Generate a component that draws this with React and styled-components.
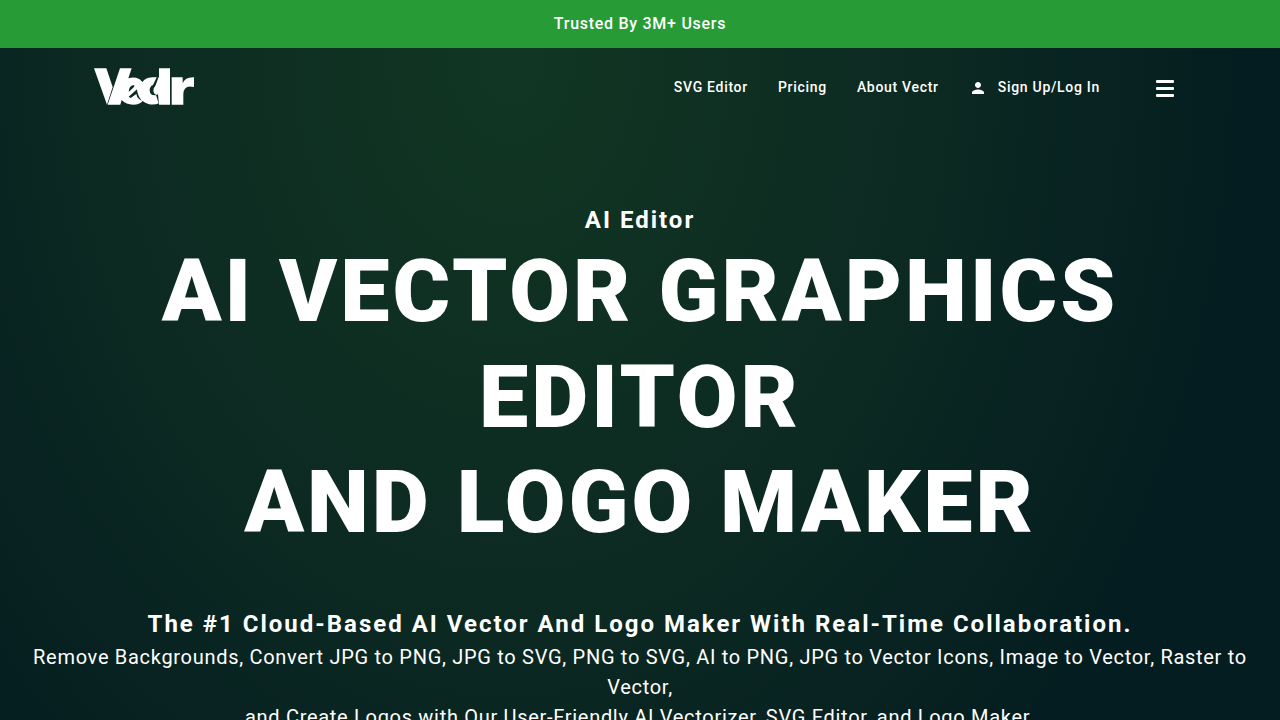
import React from "react";
import styled, { createGlobalStyle } from "styled-components";
import { MdPerson } from "react-icons/md";

const GlobalStyle = createGlobalStyle`
  * {
    box-sizing: border-box;
  }

  body {
    margin: 0;
    background: #041d20;
    color: #fff;
    font-family: Roboto, "Liberation Sans", sans-serif;
  }

  h1,
  h2,
  p {
    margin: 0;
  }
`;

const Page = styled.div`
  min-height: 100vh;
  overflow: hidden;
  background: radial-gradient(
    ellipse 740px 960px at 40% 8%,
    #113622 0%,
    #0d2b22 50%,
    #041d20 100%
  );
`;

const Banner = styled.div`
  padding: 12px 16px;
  background: #279b35;
  font-size: 16px;
  font-weight: 500;
  line-height: 24px;
  letter-spacing: 0.045em;
  text-align: center;
`;

const Header = styled.header`
  display: flex;
  align-items: center;
  justify-content: space-between;
  max-width: 1120px;
  margin: 0 auto;
  padding: 20px 24px 20px 14px;
`;

const LogoLink = styled.a`
  display: block;
  color: #fff;

  svg {
    display: block;
  }
`;

const Nav = styled.nav`
  display: flex;
  align-items: center;
  gap: 30px;
`;

const NavLink = styled.a`
  display: flex;
  align-items: center;
  gap: 11px;
  color: #fff;
  font-size: 14px;
  font-weight: 500;
  line-height: 20px;
  letter-spacing: 0.05em;
  text-decoration: none;

  svg {
    margin-top: 2px;
  }
`;

const MenuButton = styled.button`
  display: flex;
  flex-direction: column;
  gap: 4px;
  width: 20px;
  margin-left: 26px;
  padding: 2px 0 0;
  border: 0;
  background: none;
  cursor: pointer;
`;

const MenuBar = styled.span`
  width: 18px;
  height: 3px;
  border-radius: 1px;
  background: #fff;
`;

const Hero = styled.main`
  padding: 76px 20px 60px;
  text-align: center;
`;

const Subheading = styled.h2`
  font-size: 24px;
  font-weight: 700;
  line-height: 36px;
  letter-spacing: 2px;
`;

const Title = styled.h1`
  max-width: 1120px;
  margin: 0 auto 51px;
  font-size: 88px;
  font-weight: 900;
  line-height: 1.2;
  letter-spacing: 3px;
`;

const Description = styled.p`
  font-size: 20px;
  line-height: 30px;
  letter-spacing: 0.035em;
`;

const links = ["SVG Editor", "Pricing", "About Vectr"];

const Logo = () => (
  <svg width="100" height="38" viewBox="0 0 300 114" fill="currentColor">
    <path d="M0 1H37L56 57L39 110Z" />
    <path d="M78 1H113L103 31Q114 27 126 29Q139 32 145 42Q155 29 174 28H195V1H228V110H195V106Q180 112 163 108Q153 105 146 99Q138 110 117 110Q96 110 83 96L79 110H41Z" />
    <path d="M233 28H266V46Q273 27 300 28V57Q269 49 268 78V110H233Z" />
    <g fill="#0c2c22">
      <path d="M104 72Q105 53 119 51Q124 54 117 60Z" />
      <path d="M104 86L129 64Q130 82 143 98L135 93Q128 87 127 78L110 90Z" />
      <path d="M188 28L194 27L184 54Q178 59 178 68Q179 78 188 81Q169 85 167 68Q167 54 177 51Z" />
      <path d="M186 81L192 79L195 110Z" />
    </g>
  </svg>
);

const App = () => {
  return (
    <Page>
      <GlobalStyle />
      <Banner>Trusted By 3M+ Users</Banner>
      <Header>
        <LogoLink href="#" aria-label="Vectr">
          <Logo />
        </LogoLink>
        <Nav>
          {links.map(link => (
            <NavLink href="#" key={link}>
              {link}
            </NavLink>
          ))}
          <NavLink href="#">
            <MdPerson size={18} />
            Sign Up/Log In
          </NavLink>
          <MenuButton type="button" aria-label="Menu">
            <MenuBar />
            <MenuBar />
            <MenuBar />
          </MenuButton>
        </Nav>
      </Header>
      <Hero>
        <Subheading>AI Editor</Subheading>
        <Title>
          AI VECTOR GRAPHICS EDITOR
          <br />
          AND LOGO MAKER
        </Title>
        <Subheading>
          The #1 Cloud-Based AI Vector And Logo Maker With Real-Time
          Collaboration.
        </Subheading>
        <Description>
          Remove Backgrounds, Convert JPG to PNG, JPG to SVG, PNG to SVG, AI to
          PNG, JPG to Vector Icons, Image to Vector, Raster to Vector,
          <br />
          and Create Logos with Our User-Friendly AI Vectorizer, SVG Editor, and
          Logo Maker.
        </Description>
      </Hero>
    </Page>
  );
};

export default App;
